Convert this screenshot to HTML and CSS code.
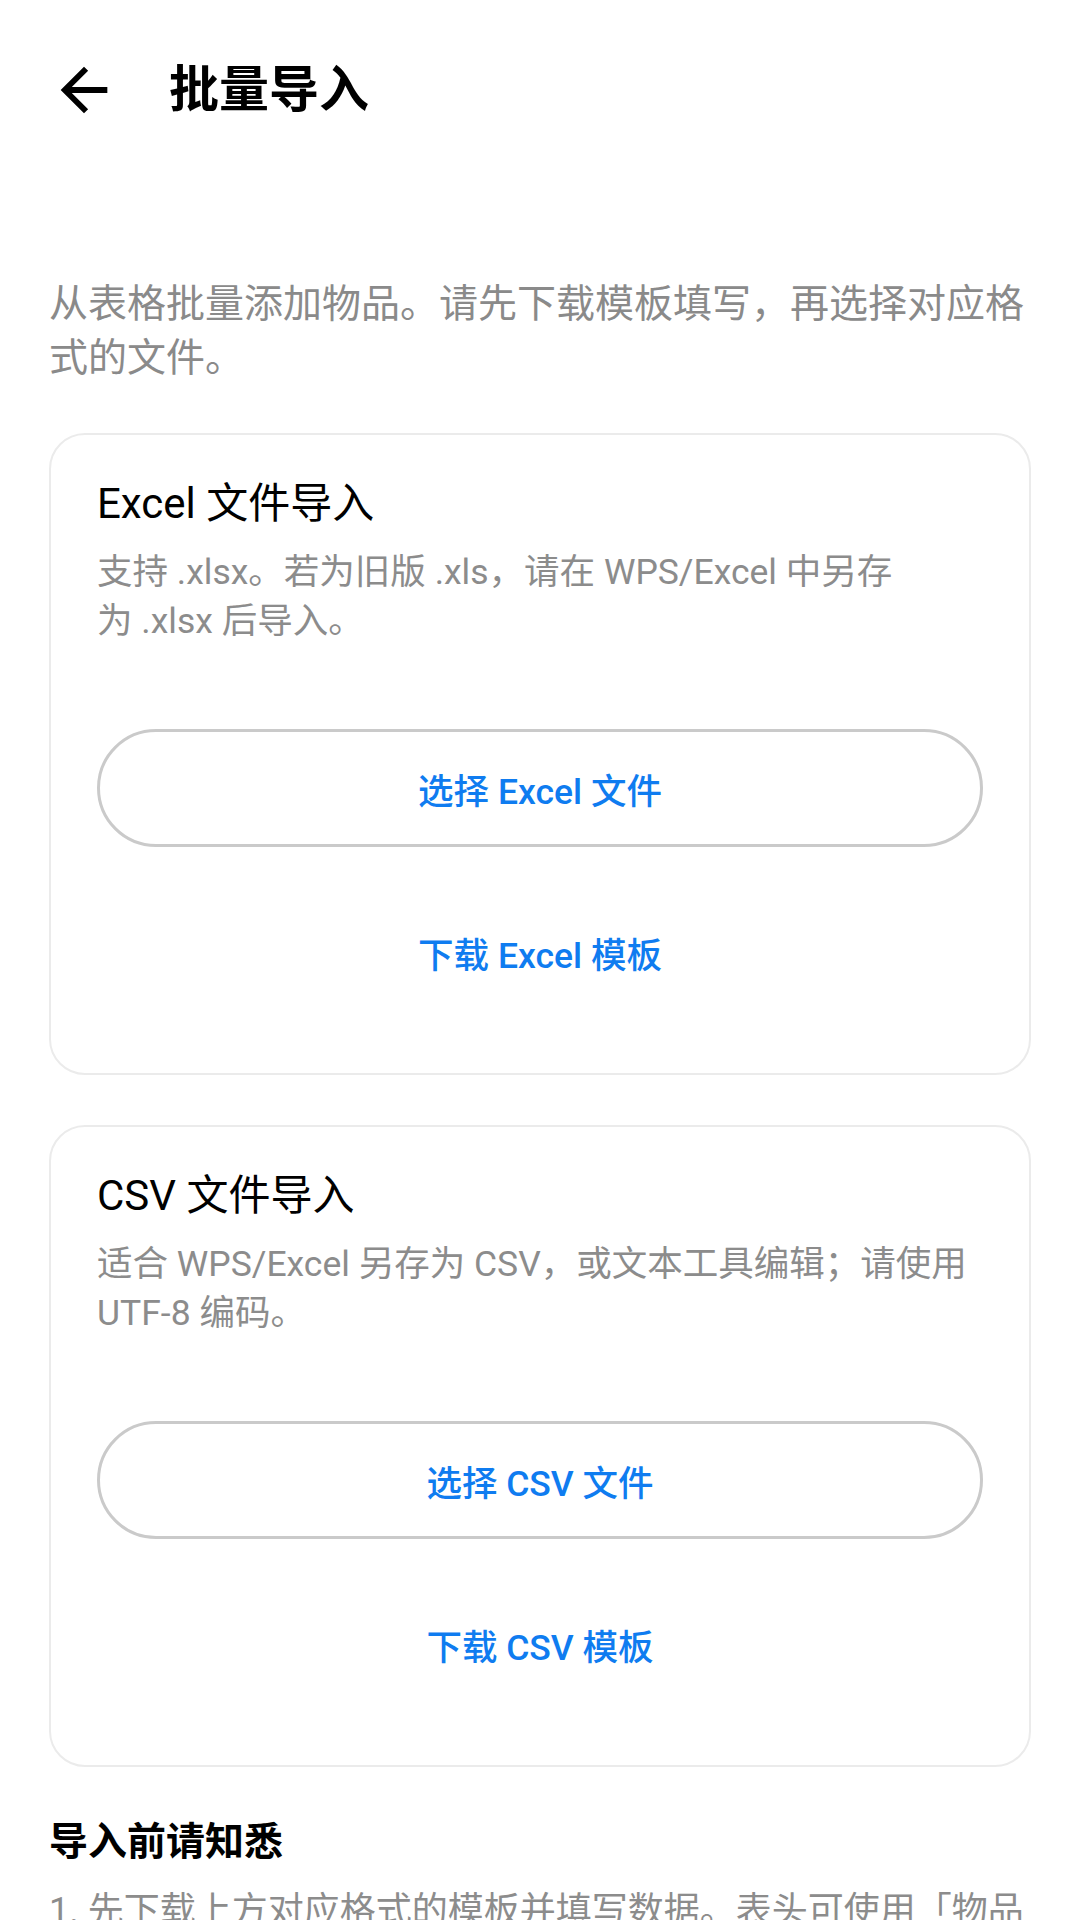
FILE: index.html
```html
<!DOCTYPE html>
<html lang="zh-CN">
<head>
<meta charset="utf-8">
<title>批量导入</title>
<link rel="stylesheet" href="styles.css">
</head>
<body>
<div class="screen">
  <header class="appbar">
    <button class="back" aria-label="返回">
      <svg viewBox="0 0 24 24" width="70" height="70"><path d="M20 11H7.83l5.59-5.59L12 4l-8 8 8 8 1.41-1.41L7.83 13H20v-2z" fill="#000"/></svg>
    </button>
    <h1 class="title">批量导入</h1>
  </header>

  <p class="intro">从表格批量添加物品。请先下载模板填写，再选择对应格式的文件。</p>

  <section class="card">
    <h2 class="card-title">Excel 文件导入</h2>
    <p class="card-desc">支持 .xlsx。若为旧版 .xls，请在 WPS/Excel 中另存<br>为 .xlsx 后导入。</p>
    <button class="btn-outline">选择 Excel 文件</button>
    <button class="btn-text">下载 Excel 模板</button>
  </section>

  <section class="card">
    <h2 class="card-title">CSV 文件导入</h2>
    <p class="card-desc">适合 WPS/Excel 另存为 CSV，或文本工具编辑；请使用<br>UTF-8 编码。</p>
    <button class="btn-outline">选择 CSV 文件</button>
    <button class="btn-text">下载 CSV 模板</button>
  </section>

  <section class="notes">
    <h3 class="notes-title">导入前请知悉</h3>
    <p class="notes-item">1. 先下载上方对应格式的模板并填写数据。表头可使用「物品名称」「分类」「数量」等列名。</p>
  </section>
</div>
</body>
</html>
```

FILE: styles.css
```css
* { box-sizing: border-box; }

html, body {
  margin: 0;
  padding: 0;
  background: #ffffff;
}

body {
  width: 1080px;
  height: 1920px;
  overflow: hidden;
  font-family: Roboto, "Noto Sans CJK SC", "Noto Sans", sans-serif;
  color: #000;
}

.screen {
  display: flex;
  flex-direction: column;
  padding: 0 49px;
}

.appbar {
  height: 180px;
  display: flex;
  align-items: center;
  gap: 50px;
}

.back {
  width: 70px;
  height: 70px;
  padding: 0;
  border: 0;
  background: none;
  display: flex;
  align-items: center;
  justify-content: center;
}

.back svg { display: block; }

.title {
  margin: 0;
  font-size: 50px;
  font-weight: 700;
  line-height: 60px;
  color: #000;
}

.intro {
  margin: 97px 0 0;
  font-size: 39px;
  line-height: 54px;
  color: #8a8a8a;
}

.card {
  margin-top: 48px;
  border: 2px solid #ebebeb;
  border-radius: 36px;
  padding: 41px 46px 58px;
  display: flex;
  flex-direction: column;
}

.card + .card { margin-top: 50px; }

.card-title {
  margin: 0;
  font-size: 42px;
  font-weight: 400;
  line-height: 56px;
  color: #000;
}

.card-desc {
  margin: 16px 0 0;
  font-size: 35.5px;
  line-height: 49px;
  color: #8c8c8c;
}

.btn-outline,
.btn-text {
  height: 118px;
  font-family: inherit;
  font-size: 35.5px;
  font-weight: 500;
  color: #0f7cf0;
  background: #fff;
  display: flex;
  align-items: center;
  justify-content: center;
  padding: 0;
}

.btn-outline {
  margin-top: 83px;
  border: 3px solid #cacaca;
  border-radius: 59px;
}

.btn-text {
  margin-top: 46px;
  margin-bottom: 4px;
  border: 0;
}

.notes { margin-top: 48px; }

.notes-title {
  margin: 0;
  font-size: 39px;
  font-weight: 700;
  line-height: 54px;
  color: #000;
}

.notes-item {
  margin: 16px 0 0;
  font-size: 36px;
  line-height: 52px;
  color: #8c8c8c;
}
```
